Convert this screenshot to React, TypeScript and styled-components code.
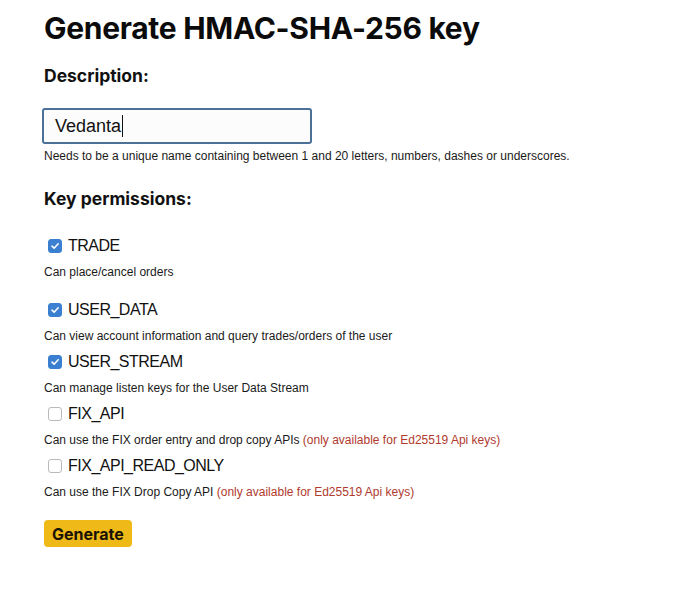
import styled, { createGlobalStyle } from "styled-components";

const GlobalStyle = createGlobalStyle`
  html, body {
    margin: 0;
    padding: 0;
    background: #ffffff;
  }
  body {
    font-family: "Liberation Sans", Arial, sans-serif;
    color: #111111;
  }
`;

interface Permission {
  name: string;
  description: string;
  checked: boolean;
  note?: string;
}

const PERMISSIONS: Permission[] = [
  { name: "TRADE", description: "Can place/cancel orders", checked: true },
  {
    name: "USER_DATA",
    description: "Can view account information and query trades/orders of the user",
    checked: true,
  },
  {
    name: "USER_STREAM",
    description: "Can manage listen keys for the User Data Stream",
    checked: true,
  },
  {
    name: "FIX_API",
    description: "Can use the FIX order entry and drop copy APIs",
    checked: false,
    note: "(only available for Ed25519 Api keys)",
  },
  {
    name: "FIX_API_READ_ONLY",
    description: "Can use the FIX Drop Copy API",
    checked: false,
    note: "(only available for Ed25519 Api keys)",
  },
];

function CheckIcon() {
  return (
    <svg width="10" height="10" viewBox="0 0 10 10">
      <path
        d="M2 5.2 L4.1 7.2 L8.2 2.8"
        fill="none"
        stroke="#ffffff"
        strokeWidth="1.6"
        strokeLinecap="round"
        strokeLinejoin="round"
      />
    </svg>
  );
}

export default function App() {
  return (
    <>
      <GlobalStyle />
      <Page>
        <Title>Generate HMAC-SHA-256 key</Title>
        <SectionLabel>Description:</SectionLabel>
        <Field>
          <TextBox>
            Vedanta
            <Caret />
          </TextBox>
          <Hint>
            Needs to be a unique name containing between 1 and 20 letters, numbers,
            dashes or underscores.
          </Hint>
        </Field>
        <SectionLabel $top={24}>Key permissions:</SectionLabel>
        <PermissionList>
          {PERMISSIONS.map((p, i) => (
            <PermissionItem key={p.name} $first={i === 0}>
              <CheckRow>
                <Box $checked={p.checked}>{p.checked && <CheckIcon />}</Box>
                <PermName>{p.name}</PermName>
              </CheckRow>
              <PermDesc>
                {p.description}
                {p.note && <Note> {p.note}</Note>}
              </PermDesc>
            </PermissionItem>
          ))}
        </PermissionList>
        <GenerateButton>Generate</GenerateButton>
      </Page>
    </>
  );
}

const Page = styled.div`
  padding: 9px 44px 40px;
`;

const Title = styled.h1`
  margin: 0;
  font-family: Inter, "Liberation Sans", sans-serif;
  font-size: 30px;
  font-weight: 700;
  line-height: 38px;
  color: #0b0b0b;
  letter-spacing: -0.3px;
`;

const SectionLabel = styled.h2<{ $top?: number }>`
  margin: ${(p) => p.$top ?? 18}px 0 0;
  font-family: Inter, "Liberation Sans", sans-serif;
  font-size: 17.5px;
  font-weight: 700;
  line-height: 22px;
  color: #111111;
`;

const Field = styled.div`
  margin-top: 21px;
`;

const TextBox = styled.div`
  box-sizing: border-box;
  width: 270px;
  height: 36px;
  margin-left: -2px;
  padding: 0 11px;
  display: flex;
  align-items: center;
  border: 2px solid #4c7199;
  border-radius: 3px;
  background: #fcfcfd;
  font-size: 18px;
  color: #111111;
`;

const Caret = styled.span`
  display: inline-block;
  width: 1px;
  height: 22px;
  margin-left: 1px;
  background: #111111;
`;

const Hint = styled.div`
  margin-top: 5px;
  font-size: 12px;
  line-height: 15px;
  color: #1a1a1a;
`;

const PermissionList = styled.div`
  margin-top: 25px;
  display: flex;
  flex-direction: column;
`;

const PermissionItem = styled.div<{ $first: boolean }>`
  margin-bottom: ${(p) => (p.$first ? 19 : 7)}px;
`;

const CheckRow = styled.label`
  display: flex;
  align-items: center;
  gap: 6px;
  height: 22px;
  padding-left: 4px;
`;

const Box = styled.span<{ $checked: boolean }>`
  box-sizing: border-box;
  width: 14px;
  height: 14px;
  border-radius: 3px;
  display: flex;
  align-items: center;
  justify-content: center;
  background: ${(p) => (p.$checked ? "#3a7fd0" : "#ffffff")};
  border: 1px solid ${(p) => (p.$checked ? "#3a7fd0" : "#b9b9b9")};
`;

const PermName = styled.span`
  font-size: 16px;
  letter-spacing: -0.5px;
  color: #111111;
`;

const PermDesc = styled.div`
  margin-top: 7px;
  font-size: 12px;
  line-height: 16px;
  color: #1a1a1a;
`;

const Note = styled.span`
  color: #b03a2e;
`;

const GenerateButton = styled.button`
  margin-top: 13px;
  padding: 0 8px;
  height: 27px;
  border: none;
  border-radius: 4px;
  background: #efb918;
  font-family: Inter, "Liberation Sans", sans-serif;
  font-size: 16px;
  font-weight: 700;
  color: #1a1205;
  cursor: pointer;
`;
